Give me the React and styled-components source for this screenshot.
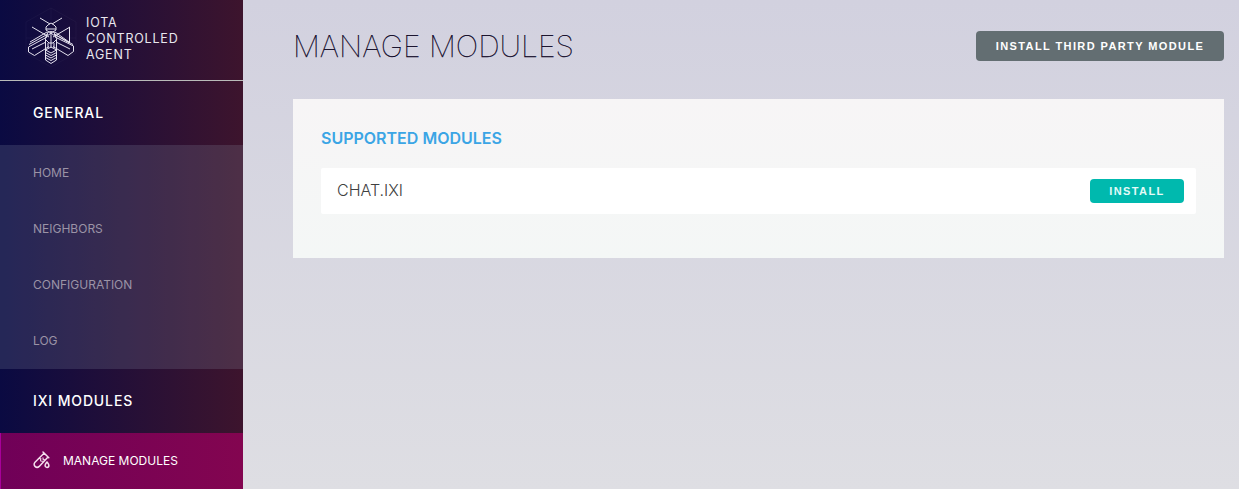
import React from 'react';
import styled, { createGlobalStyle } from 'styled-components';

const GlobalStyle = createGlobalStyle`
  * { box-sizing: border-box; }
  html, body { margin: 0; height: 100%; overflow: hidden; }
  body { font-family: Inter, "Liberation Sans", sans-serif; }
`;

const Page = styled.div`
  display: flex;
  height: 489px;
  overflow: hidden;
  background: linear-gradient(180deg, #d2d1df 0%, #dedee3 100%);
`;

const Sidebar = styled.nav`
  flex: 0 0 243px;
  display: flex;
  flex-direction: column;
  background: linear-gradient(90deg, #0a0a42 0%, #3d142d 100%);
`;

const Brand = styled.header`
  height: 81px;
  flex: none;
  display: flex;
  padding: 7px 0 0 25px;
  border-bottom: 1px solid #b9bbb9;
`;

const BrandName = styled.div`
  margin: 8px 0 0 9px;
  color: #e9e7ee;
  font-size: 12.5px;
  line-height: 16px;
  letter-spacing: 0.8px;
`;

const SectionTitle = styled.div`
  height: 64px;
  flex: none;
  display: flex;
  align-items: center;
  padding: 0 0 2px 33px;
  color: #fff;
  font-size: 14px;
  font-weight: 500;
  letter-spacing: 0.87px;
`;

const Item = styled.a`
  height: 56px;
  flex: none;
  display: flex;
  align-items: center;
  padding: 0 0 2px 33px;
  font-size: 12px;
  color: #9b93a6;
  background: rgba(147, 153, 173, 0.2);
`;

const ActiveItem = styled(Item)`
  padding-left: 32px;
  gap: 12px;
  color: #fff;
  border-left: 1px solid #a8009a;
  background: linear-gradient(90deg, #700058 0%, #830550 100%);
`;

const Main = styled.main`
  flex: 1;
  padding: 28px 15px 0 50px;
`;

const TopRow = styled.div`
  height: 71px;
  display: flex;
  justify-content: space-between;
  align-items: flex-start;
`;

const Title = styled.h1`
  margin: 0;
  font-size: 30px;
  line-height: 37px;
  font-weight: 100;
  color: #08001c;
  -webkit-text-stroke: 0.25px #08001c;
`;

const Button = styled.button`
  border: 0;
  margin: ${(p) => (p.$small ? 0 : '3px 0 0')};
  width: ${(p) => (p.$small ? 94 : 248)}px;
  height: ${(p) => (p.$small ? 24 : 30)}px;
  padding: 0;
  border-radius: 4px;
  background: ${(p) => (p.$small ? '#00b9ae' : '#636e72')};
  color: ${(p) => (p.$small ? '#e4fbf8' : '#fff')};
  font: bold 11px "Liberation Sans", Arial, sans-serif;
  letter-spacing: 1.4px;
`;

const Panel = styled.section`
  height: 159px;
  padding: 29px 28px 0;
  background: linear-gradient(180deg, #f7f5f6 0%, #f4f7f6 100%);
`;

const PanelTitle = styled.h2`
  margin: 0 0 20px;
  color: #3ba5e5;
  font-size: 16px;
  line-height: 20px;
  font-weight: 600;
`;

const ModuleRow = styled.div`
  height: 46px;
  display: flex;
  align-items: center;
  justify-content: space-between;
  padding: 0 12px 0 16px;
  border-radius: 2px;
  background: #fff;
`;

const ModuleName = styled.span`
  padding-bottom: 2px;
  color: #404040;
  font-size: 16px;
  font-weight: 300;
  line-height: 20px;
`;

const Logo = () => (
  <svg width="52" height="61" viewBox="25 7 52 61" fill="none" stroke="#e4e1ee" strokeWidth="1" strokeLinejoin="round">
    <path d="M51 8 76 22v31L51 67 26 53V22zM26 38h50M51 8v12" stroke="#fff" strokeOpacity=".03" />
    <path d="M40 18l10 6M62 18l-10 6" />
    <path d="M48 25l3-2 3 2 2 2v3l-3 2h-4l-3-2v-3zM46 29h10" />
    <path d="M32 27l17 10M70 27L53 37M69.5 27v16L54 34" />
    <path d="M47 32L30 42M55 32l14 10M48 34L29 44.500M54 34l19 10.500" />
    <path d="M47 37L28.500 47v5l6 3.500L49 46.500M55 37l18.500 9v5.500L68 55.500 53 46.500" />
    <path d="M46 42l-14 7M56 42l14 7" />
    <path d="M48 32h6l3 7-4 4h-4l-4-4zM51 31v17M46 37l5-4 5 4M45.500 40v20M56.500 40v20M48 43v5M54 43v5" />
    <path d="M45.500 50l5.500-3 5.500 3-5.500 3zM45.500 52.500l5.500 3 5.500-3M45.500 55l5.500 3 5.500-3M45.500 57.500l5.500 3 5.500-3M45.500 60l5.500 3.500 5.500-3.500" />
  </svg>
);

const TestTube = () => (
  <svg width="18" height="18" viewBox="0 0 18 18" fill="none" stroke="#f5dfee" strokeWidth="1.500" strokeLinecap="round" strokeLinejoin="round">
    <path d="M10 1l5.800 5.800M11 2.200L2 11.200a2.900 2.900 0 0 0 4.200 4.200L14.800 6.300" />
    <path d="M6 7.500l2 .3M7.500 8l.2 2 2 .3M10 6.800l.2 1.800 1.600.2" strokeWidth="1.100" />
    <path d="M14 11c-1 1.400-1.900 2.300-1.900 3.500a1.900 1.900 0 0 0 3.800 0c0-1.200-.9-2.100-1.900-3.500z" />
  </svg>
);

const links = ['HOME', 'NEIGHBORS', 'CONFIGURATION', 'LOG'];

export default function App() {
  return (
    <>
      <GlobalStyle />
      <Page>
        <Sidebar>
          <Brand>
            <Logo />
            <BrandName>IOTA<br />CONTROLLED<br />AGENT</BrandName>
          </Brand>
          <SectionTitle>GENERAL</SectionTitle>
          {links.map((label) => <Item key={label}>{label}</Item>)}
          <SectionTitle>IXI MODULES</SectionTitle>
          <ActiveItem><TestTube />MANAGE MODULES</ActiveItem>
        </Sidebar>
        <Main>
          <TopRow>
            <Title>MANAGE MODULES</Title>
            <Button>INSTALL THIRD PARTY MODULE</Button>
          </TopRow>
          <Panel>
            <PanelTitle>SUPPORTED MODULES</PanelTitle>
            <ModuleRow>
              <ModuleName>CHAT.IXI</ModuleName>
              <Button $small>INSTALL</Button>
            </ModuleRow>
          </Panel>
        </Main>
      </Page>
    </>
  );
}
